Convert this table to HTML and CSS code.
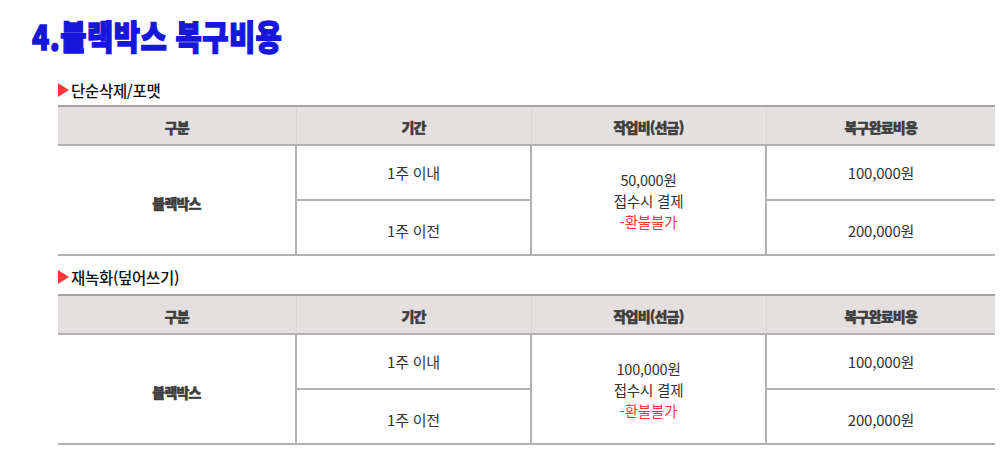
FILE: index.html
```html
<!DOCTYPE html>
<html lang="ko">
<head>
<meta charset="utf-8">
<link rel="stylesheet" href="styles.css">
</head>
<body>
<div class="page">
  <h1 class="title"><span class="title-text">4.블랙박스 복구비용</span></h1>

  <section class="block">
    <h2 class="label"><span class="arrow"></span>단순삭제/포맷</h2>
    <table class="price">
      <colgroup><col class="c1"><col class="c2"><col class="c3"><col class="c4"></colgroup>
      <thead>
        <tr><th>구분</th><th>기간</th><th>작업비(선금)</th><th>복구완료비용</th></tr>
      </thead>
      <tbody>
        <tr>
          <td rowspan="2" class="strong">블랙박스</td>
          <td>1주 이내</td>
          <td rowspan="2" class="fee"><span class="line">50,000원</span><span class="line">접수시 결제</span><span class="line red">-환불불가</span></td>
          <td>100,000원</td>
        </tr>
        <tr>
          <td class="low">1주 이전</td>
          <td class="low">200,000원</td>
        </tr>
      </tbody>
    </table>
  </section>

  <section class="block second">
    <h2 class="label"><span class="arrow"></span>재녹화(덮어쓰기)</h2>
    <table class="price">
      <colgroup><col class="c1"><col class="c2"><col class="c3"><col class="c4"></colgroup>
      <thead>
        <tr><th>구분</th><th>기간</th><th>작업비(선금)</th><th>복구완료비용</th></tr>
      </thead>
      <tbody>
        <tr>
          <td rowspan="2" class="strong">블랙박스</td>
          <td>1주 이내</td>
          <td rowspan="2" class="fee"><span class="line">100,000원</span><span class="line">접수시 결제</span><span class="line red">-환불불가</span></td>
          <td>100,000원</td>
        </tr>
        <tr>
          <td class="low">1주 이전</td>
          <td class="low">200,000원</td>
        </tr>
      </tbody>
    </table>
  </section>
</div>
</body>
</html>
```

FILE: styles.css
```css
* { box-sizing: border-box; }
html, body { margin: 0; padding: 0; background: #fff; }
body {
  font-family: "Noto Sans CJK KR", "Noto Sans", sans-serif;
  color: #333;
}
.page {
  width: 1000px;
  padding: 16px 0 0 32px;
}
.title {
  margin: 0;
  height: 48px;
  font-size: 34px;
  line-height: 40px;
  font-weight: 900;
  color: #1717dc;
  white-space: nowrap;
}
.title-text {
  display: inline-block;
  transform: scaleX(0.84);
  transform-origin: left center;
  letter-spacing: 0.5px;
  -webkit-text-stroke: 1.4px #1717dc;
}
.block {
  padding-left: 26px;
}
.label {
  margin: 0;
  display: flex;
  align-items: center;
  height: 41px;
  padding-top: 10px;
  font-size: 15.5px;
  font-weight: 500;
  color: #111;
  letter-spacing: -0.3px;
}
.second .label {
  height: 38px;
  padding-top: 4px;
}
.arrow {
  display: inline-block;
  width: 0;
  height: 0;
  border-top: 7px solid transparent;
  border-bottom: 7px solid transparent;
  border-left: 11px solid #f23a3a;
  margin-right: 2px;
}
.price {
  width: 937px;
  table-layout: fixed;
  border-collapse: collapse;
}
.c1 { width: 238px; }
.c2 { width: 235px; }
.c3 { width: 235px; }
.c4 { width: 229px; }
.price th {
  height: 39px;
  padding: 3px 0 0;
  background: #e3e0df;
  border-top: 2px solid #a3a3a3;
  border-bottom: 2px solid #b2b2b2;
  border-left: 1px solid #d9d6d5;
  font-size: 14px;
  font-weight: 900;
  color: #3d3d3d;
  letter-spacing: -0.8px;
  -webkit-text-stroke: 0.5px #3d3d3d;
  text-align: center;
}
.price th:first-child { border-left: none; }
.price td {
  height: 55px;
  padding: 0;
  border: 2px solid #b2b2b2;
  text-align: center;
  font-size: 15px;
  color: #333;
  letter-spacing: -0.2px;
}
.price td.low { padding-top: 5px; }
.price tr > td:first-child { border-left: none; }
.price tr > td:last-child { border-right: none; }
.price td.strong {
  font-size: 14px;
  font-weight: 900;
  color: #3d3d3d;
  letter-spacing: -0.8px;
  -webkit-text-stroke: 0.5px #3d3d3d;
  padding-top: 6px;
  border-left: none;
}
.price td.fee {
  font-size: 14.5px;
  line-height: 21px;
  padding-top: 1px;
}
.line {
  display: block;
  height: 21px;
  line-height: 21px;
}
.red { color: #f23a3a; }
```
